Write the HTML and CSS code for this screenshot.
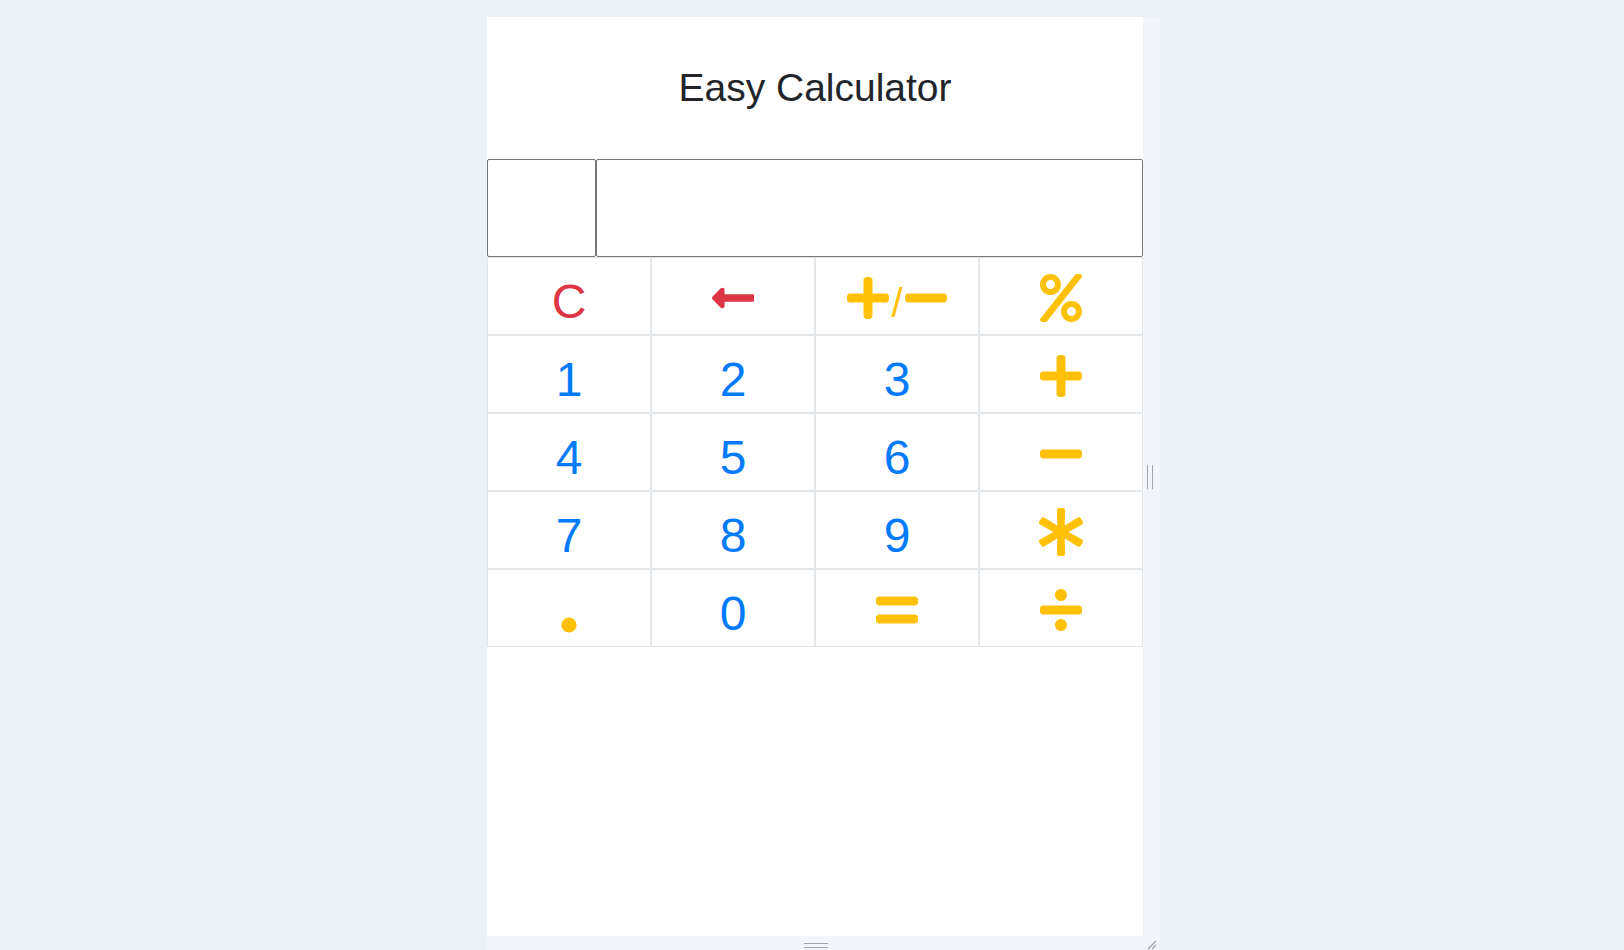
FILE: index.html
```html
<!DOCTYPE html>
<html lang="en">
<head>
<meta charset="utf-8">
<title>Easy Calculator</title>
<link rel="stylesheet" href="styles.css">
</head>
<body>
<div class="stage">
  <div class="frame">
    <main class="app">
      <h1 class="title">Easy Calculator</h1>
      <div class="display">
        <input class="field field-op" type="text" readonly>
        <input class="field field-value" type="text" readonly>
      </div>
      <div class="keys">
        <button class="key red"><span class="num">C</span></button>
        <button class="key red" aria-label="backspace">
          <svg class="ic" viewBox="0 0 448 512" width="42" height="48"><path fill="currentColor" d="M134.059 296H436c6.627 0 12-5.373 12-12v-56c0-6.627-5.373-12-12-12H134.059v-46.059c0-21.382-25.851-32.090-40.971-16.971L7.029 239.029c-9.373 9.373-9.373 24.569 0 33.941l86.059 86.059c15.119 15.119 40.971 4.411 40.971-16.971V296z"/></svg>
        </button>
        <button class="key yellow" aria-label="plus minus">
          <svg class="ic" viewBox="0 0 448 512" width="42" height="48"><path fill="currentColor" d="M416 208H272V64c0-17.67-14.330-32-32-32h-32c-17.670 0-32 14.330-32 32v144H32c-17.670 0-32 14.330-32 32v32c0 17.670 14.330 32 32 32h144v144c0 17.670 14.330 32 32 32h32c17.670 0 32-14.330 32-32V304h144c17.670 0 32-14.330 32-32v-32c0-17.670-14.330-32-32-32z"/></svg>
          <span class="slash">/</span>
          <svg class="ic" viewBox="0 0 448 512" width="42" height="48"><path fill="currentColor" d="M416 208H32c-17.670 0-32 14.330-32 32v32c0 17.670 14.330 32 32 32h384c17.670 0 32-14.330 32-32v-32c0-17.670-14.330-32-32-32z"/></svg>
        </button>
        <button class="key yellow" aria-label="percent">
          <svg class="ic" viewBox="0 0 448 512" width="42" height="48"><path fill="currentColor" d="M112 224c61.900 0 112-50.100 112-112S173.900 0 112 0 0 50.100 0 112s50.100 112 112 112zm0-160c26.500 0 48 21.500 48 48s-21.500 48-48 48-48-21.500-48-48 21.500-48 48-48zm224 224c-61.900 0-112 50.100-112 112s50.100 112 112 112 112-50.100 112-112-50.100-112-112-112zm0 160c-26.500 0-48-21.500-48-48s21.500-48 48-48 48 21.500 48 48-21.500 48-48 48zM392.300.2l31.600-.1c19.400-.1 30.900 21.800 19.700 37.800L77.400 501.600a23.950 23.950 0 0 1-19.600 10.200l-33.400.1c-19.500 0-30.900-21.900-19.700-37.800l368-463.700C377.200 4 384.500.2 392.300.2z"/></svg>
        </button>

        <button class="key blue"><span class="num">1</span></button>
        <button class="key blue"><span class="num">2</span></button>
        <button class="key blue"><span class="num">3</span></button>
        <button class="key yellow" aria-label="add">
          <svg class="ic" viewBox="0 0 448 512" width="42" height="48"><path fill="currentColor" d="M416 208H272V64c0-17.670-14.330-32-32-32h-32c-17.670 0-32 14.330-32 32v144H32c-17.670 0-32 14.330-32 32v32c0 17.670 14.330 32 32 32h144v144c0 17.670 14.330 32 32 32h32c17.670 0 32-14.330 32-32V304h144c17.670 0 32-14.330 32-32v-32c0-17.670-14.330-32-32-32z"/></svg>
        </button>

        <button class="key blue"><span class="num">4</span></button>
        <button class="key blue"><span class="num">5</span></button>
        <button class="key blue"><span class="num">6</span></button>
        <button class="key yellow" aria-label="subtract">
          <svg class="ic" viewBox="0 0 448 512" width="42" height="48"><path fill="currentColor" d="M416 208H32c-17.670 0-32 14.330-32 32v32c0 17.670 14.330 32 32 32h384c17.670 0 32-14.330 32-32v-32c0-17.670-14.330-32-32-32z"/></svg>
        </button>

        <button class="key blue"><span class="num">7</span></button>
        <button class="key blue"><span class="num">8</span></button>
        <button class="key blue"><span class="num">9</span></button>
        <button class="key yellow" aria-label="multiply">
          <svg class="ic" viewBox="0 0 512 512" width="48" height="48"><path fill="currentColor" d="M478.210 334.093L336 256l142.210-78.093c11.795-6.477 15.961-21.384 9.232-33.037l-19.480-33.741c-6.728-11.653-21.720-15.499-33.227-8.523L296 186.718l3.475-162.204C299.763 11.061 288.937 0 275.480 0h-38.960c-13.456 0-24.283 11.061-23.994 24.514L216 186.718 77.265 102.607c-11.506-6.976-26.499-3.130-33.227 8.523l-19.480 33.741c-6.728 11.653-2.562 26.560 9.233 33.037L176 256 33.790 334.093c-11.795 6.477-15.961 21.384-9.232 33.037l19.480 33.741c6.728 11.653 21.721 15.499 33.227 8.523L216 325.282l-3.475 162.204C212.237 500.939 223.064 512 236.520 512h38.961c13.456 0 24.283-11.061 23.995-24.514L296 325.282l138.735 84.111c11.506 6.976 26.499 3.130 33.227-8.523l19.480-33.741c6.728-11.653 2.563-26.559-9.232-33.036z"/></svg>
        </button>

        <button class="key yellow" aria-label="decimal point">
          <svg class="dot" viewBox="0 0 16 16" width="16" height="16"><circle cx="8" cy="8" r="7.6" fill="currentColor"/></svg>
        </button>
        <button class="key blue"><span class="num">0</span></button>
        <button class="key yellow" aria-label="equals">
          <svg class="ic" viewBox="0 0 448 512" width="42" height="48"><path fill="currentColor" d="M416 304H32c-17.670 0-32 14.330-32 32v32c0 17.670 14.330 32 32 32h384c17.670 0 32-14.330 32-32v-32c0-17.670-14.330-32-32-32zm0-192H32c-17.670 0-32 14.330-32 32v32c0 17.670 14.330 32 32 32h384c17.670 0 32-14.330 32-32v-32c0-17.670-14.330-32-32-32z"/></svg>
        </button>
        <button class="key yellow" aria-label="divide">
          <svg class="ic" viewBox="0 0 448 512" width="42" height="48"><path fill="currentColor" d="M224 352c-35.350 0-64 28.650-64 64s28.650 64 64 64 64-28.650 64-64-28.650-64-64-64zm0-192c35.350 0 64-28.650 64-64s-28.650-64-64-64-64 28.650-64 64 28.650 64 64 64zm192 48H32c-17.670 0-32 14.330-32 32v32c0 17.670 14.330 32 32 32h384c17.670 0 32-14.330 32-32v-32c0-17.670-14.330-32-32-32z"/></svg>
        </button>
      </div>
    </main>
    <div class="edge-right"><span class="grip-v"></span></div>
    <div class="edge-bottom"><span class="grip-h"></span></div>
    <div class="edge-corner">
      <svg viewBox="0 0 12 12" width="12" height="12"><path d="M11 3 L3 11 M11 7 L7 11" stroke="#9a9ea6" stroke-width="1.1" fill="none"/></svg>
    </div>
  </div>
</div>
</body>
</html>
```

FILE: styles.css
```css
* { box-sizing: border-box; }

html, body {
  margin: 0;
  padding: 0;
  height: 100%;
  overflow: hidden;
}

body {
  background: #ecf0f7;
  font-family: "Liberation Sans", Arial, sans-serif;
  color: #212529;
}

.stage {
  padding: 17px 0 0 487px;
}

.frame {
  display: grid;
  grid-template-columns: 656px 17px;
  grid-template-rows: 919px 14px;
  background: #f2f5fa;
  width: 673px;
}

.app {
  background: #ffffff;
  display: flex;
  flex-direction: column;
}

.title {
  margin: 0;
  padding: 48px 0 47px;
  font-size: 39px;
  line-height: 46.8px;
  font-weight: 400;
  text-align: center;
  color: #212529;
}

.display {
  display: flex;
  height: 98px;
}

.field {
  margin: 0;
  height: 98px;
  border: 1px solid #767676;
  border-radius: 2px;
  background: #ffffff;
  font: inherit;
  padding: 0 8px;
}

.field-op { width: 109.3px; flex: none; }
.field-value { flex: 1; min-width: 0; }

.keys {
  display: grid;
  grid-template-columns: repeat(4, 1fr);
}

.key {
  margin: 0;
  height: 78px;
  padding: 16px 0 0;
  border: 1px solid #e4e7ea;
  border-radius: 0;
  background: #ffffff;
  display: flex;
  justify-content: center;
  align-items: flex-start;
  font-family: "Liberation Sans", Arial, sans-serif;
  cursor: pointer;
}

.num {
  display: block;
  font-size: 48px;
  line-height: 48px;
  margin-top: 4px;
}

.ic { display: block; }

.dot {
  display: block;
  margin-top: 31px;
}

.slash {
  display: block;
  font-size: 40px;
  line-height: 40px;
  margin: 9px 2px 0;
}

.blue { color: #007bff; }
.red { color: #dc3545; }
.yellow { color: #ffc107; }

.edge-right {
  display: flex;
  align-items: center;
  justify-content: center;
}

.grip-v {
  width: 6px;
  height: 24px;
  border-left: 1.5px solid #a0a4ab;
  border-right: 1.5px solid #a0a4ab;
  margin-left: -3px;
}

.edge-bottom {
  display: flex;
  justify-content: center;
  padding-top: 7px;
}

.grip-h {
  width: 24px;
  height: 5px;
  border-top: 1.5px solid #a0a4ab;
  border-bottom: 1.5px solid #a0a4ab;
  margin-left: 2px;
}

.edge-corner {
  display: flex;
  align-items: flex-end;
  justify-content: flex-start;
  padding-left: 2px;
}

.edge-corner svg { display: block; }
```
